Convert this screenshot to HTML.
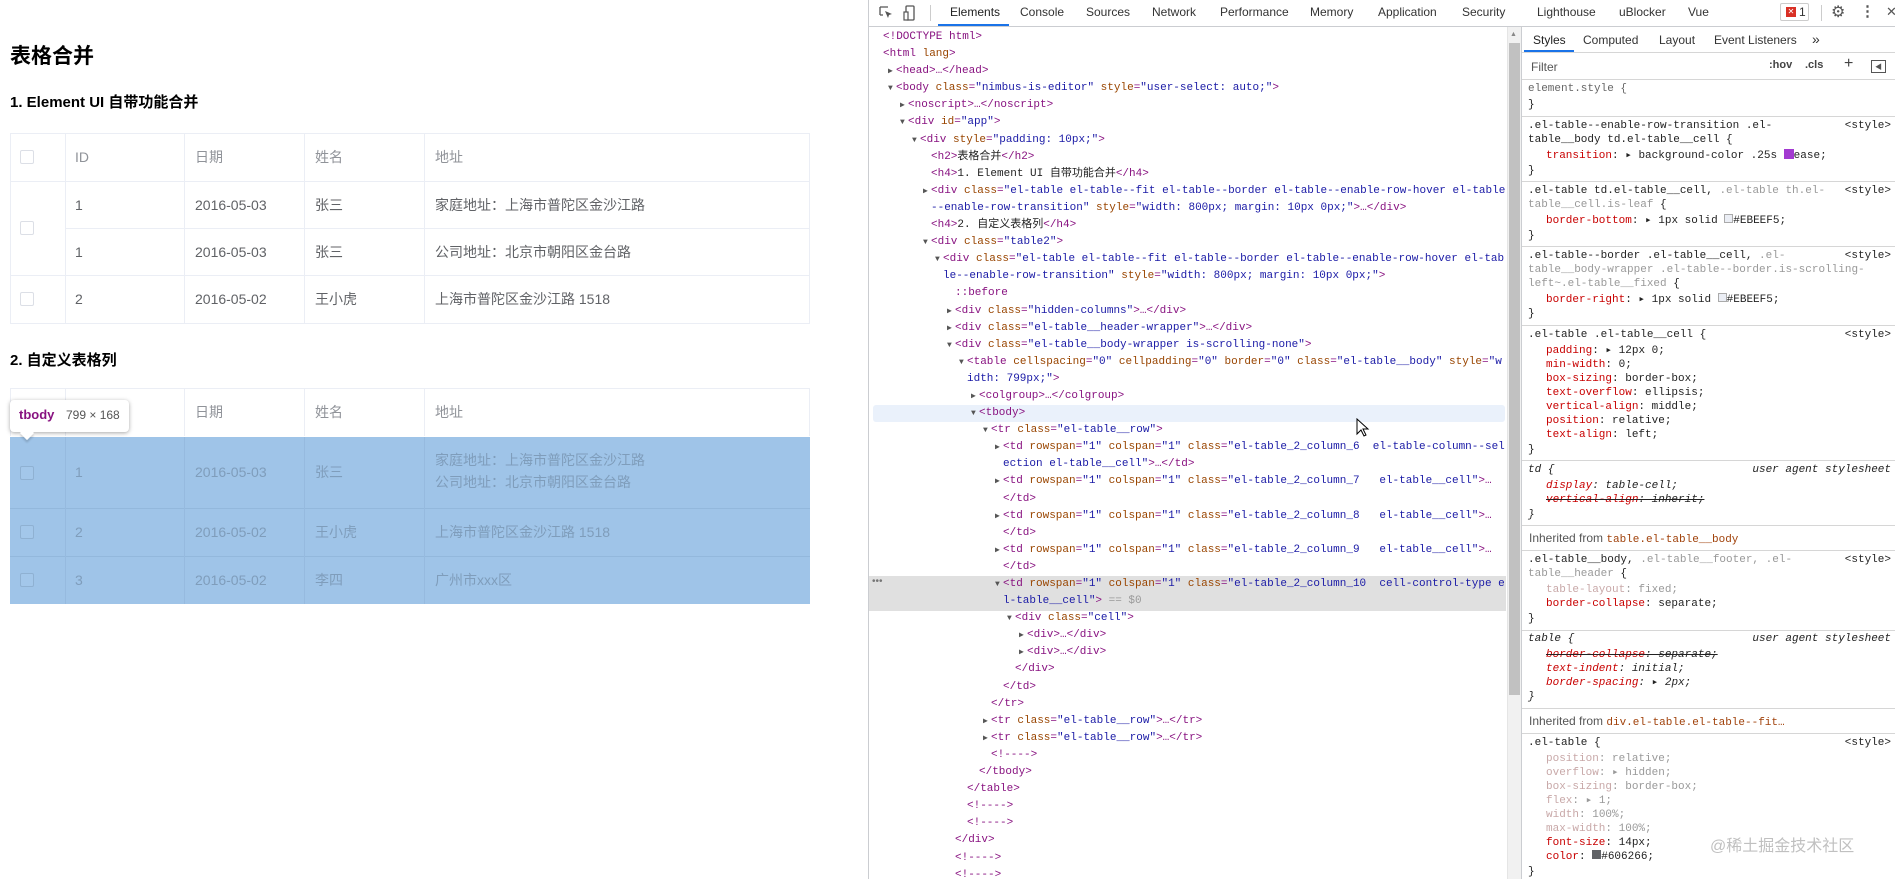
<!DOCTYPE html>
<html><head><meta charset="utf-8">
<style>
*{margin:0;padding:0;box-sizing:border-box}
body{width:1895px;height:879px;overflow:hidden;background:#fff;position:relative;font-family:"Liberation Sans","Noto Sans CJK SC",sans-serif}
.a{position:absolute;white-space:nowrap}
h2,h4{position:absolute;font-weight:bold;color:#000;white-space:nowrap}
.tbl{position:absolute;left:10px;width:800px;border:1px solid #EBEEF5;border-right:0;border-bottom:0}
.hl{position:absolute;height:1px;background:#EBEEF5}
.vl{position:absolute;width:1px;background:#EBEEF5}
.t{position:absolute;font-size:14px;color:#606266;white-space:nowrap;line-height:16px}
.th{color:#909399}
.cb{position:absolute;width:14px;height:14px;border:1px solid #DCDFE6;border-radius:2px;background:#fff}
.mono{font-family:"Liberation Mono","DejaVu Sans Mono","Noto Sans CJK SC",monospace;font-size:11px}
#dom{position:absolute;left:869px;top:29px;width:638px;}
#dom div{height:17.1px;line-height:17.1px;white-space:pre;overflow:hidden;position:relative;color:#881280}
.tg{color:#881280}.an{color:#994500}.av{color:#1a1aa6}.cm{color:#236e25}.gy{color:#999}.bk{color:#222}
.ar{position:absolute;font-size:8px;color:#555}
.sl{position:absolute;left:1528px;font-family:"Liberation Mono","DejaVu Sans Mono",monospace;font-size:11px;color:#222;white-space:nowrap;line-height:14px}
.p{left:1546px}
.pn{color:#c80000}
.dim{color:#c8a8a8}.dimv{color:#999}
.src{position:absolute;right:4px;font-family:"Liberation Mono",monospace;font-size:11px;color:#222;line-height:14px}
.sep{position:absolute;left:1522px;width:373px;height:1px;background:#d6d6d6}
.tab{position:absolute;top:5px;font-size:12px;color:#333;white-space:nowrap}
</style></head><body>

<!-- LEFT PAGE -->
<h2 style="left:10px;top:40px;font-size:21px">表格合并</h2>
<h4 style="left:10px;top:91px;font-size:15px">1. Element UI 自带功能合并</h4>

<!-- table 1 -->
<div class="hl" style="left:10px;top:133px;width:800px"></div>
<div class="hl" style="left:10px;top:181px;width:800px"></div>
<div class="hl" style="left:65px;top:228px;width:745px"></div>
<div class="hl" style="left:10px;top:275px;width:800px"></div>
<div class="hl" style="left:10px;top:323px;width:800px"></div>
<div class="vl" style="left:10px;top:133px;height:191px"></div>
<div class="vl" style="left:65px;top:133px;height:191px"></div>
<div class="vl" style="left:184px;top:133px;height:191px"></div>
<div class="vl" style="left:304px;top:133px;height:191px"></div>
<div class="vl" style="left:424px;top:133px;height:191px"></div>
<div class="vl" style="left:809px;top:133px;height:191px"></div>
<div class="cb" style="left:20px;top:150px"></div>
<div class="cb" style="left:20px;top:221px"></div>
<div class="cb" style="left:20px;top:292px"></div>
<div class="t th" style="left:75px;top:149px">ID</div>
<div class="t th" style="left:195px;top:149px">日期</div>
<div class="t th" style="left:315px;top:149px">姓名</div>
<div class="t th" style="left:435px;top:149px">地址</div>
<div class="t" style="left:75px;top:197px">1</div><div class="t" style="left:195px;top:197px">2016-05-03</div><div class="t" style="left:315px;top:197px">张三</div><div class="t" style="left:435px;top:197px">家庭地址：上海市普陀区金沙江路</div>
<div class="t" style="left:75px;top:244px">1</div><div class="t" style="left:195px;top:244px">2016-05-03</div><div class="t" style="left:315px;top:244px">张三</div><div class="t" style="left:435px;top:244px">公司地址：北京市朝阳区金台路</div>
<div class="t" style="left:75px;top:291px">2</div><div class="t" style="left:195px;top:291px">2016-05-02</div><div class="t" style="left:315px;top:291px">王小虎</div><div class="t" style="left:435px;top:291px">上海市普陀区金沙江路 1518</div>

<h4 style="left:10px;top:349px;font-size:15px">2. 自定义表格列</h4>

<!-- table 2 -->
<div class="hl" style="left:10px;top:388px;width:800px"></div>
<div class="vl" style="left:10px;top:388px;height:48px"></div>
<div class="vl" style="left:65px;top:388px;height:48px"></div>
<div class="vl" style="left:184px;top:388px;height:48px"></div>
<div class="vl" style="left:304px;top:388px;height:48px"></div>
<div class="vl" style="left:424px;top:388px;height:48px"></div>
<div class="vl" style="left:809px;top:388px;height:48px"></div>
<div class="t th" style="left:75px;top:404px">ID</div>
<div class="t th" style="left:195px;top:404px">日期</div>
<div class="t th" style="left:315px;top:404px">姓名</div>
<div class="t th" style="left:435px;top:404px">地址</div>
<div class="a" style="left:10px;top:437px;width:800px;height:167px;background:#9fc4e8"></div>
<div class="a" style="left:10px;top:508px;width:800px;height:1px;background:#93b8dc"></div>
<div class="a" style="left:10px;top:556px;width:800px;height:1px;background:#93b8dc"></div>
<div class="a" style="left:65px;top:437px;width:1px;height:167px;background:#96badf"></div>
<div class="a" style="left:184px;top:437px;width:1px;height:167px;background:#96badf"></div>
<div class="a" style="left:304px;top:437px;width:1px;height:167px;background:#96badf"></div>
<div class="a" style="left:424px;top:437px;width:1px;height:167px;background:#96badf"></div>
<div class="cb" style="left:20px;top:466px;background:#a3c7ea;border-color:#8fb1d2"></div>
<div class="cb" style="left:20px;top:525px;background:#a3c7ea;border-color:#8fb1d2"></div>
<div class="cb" style="left:20px;top:573px;background:#a3c7ea;border-color:#8fb1d2"></div>
<div class="t" style="left:75px;top:464px;color:#7f9dbb">1</div><div class="t" style="left:195px;top:464px;color:#7f9dbb">2016-05-03</div><div class="t" style="left:315px;top:464px;color:#7f9dbb">张三</div>
<div class="t" style="left:435px;top:452px;color:#7f9dbb">家庭地址：上海市普陀区金沙江路</div>
<div class="t" style="left:435px;top:474px;color:#7f9dbb">公司地址：北京市朝阳区金台路</div>
<div class="t" style="left:75px;top:524px;color:#7f9dbb">2</div><div class="t" style="left:195px;top:524px;color:#7f9dbb">2016-05-02</div><div class="t" style="left:315px;top:524px;color:#7f9dbb">王小虎</div><div class="t" style="left:435px;top:524px;color:#7f9dbb">上海市普陀区金沙江路 1518</div>
<div class="t" style="left:75px;top:572px;color:#7f9dbb">3</div><div class="t" style="left:195px;top:572px;color:#7f9dbb">2016-05-02</div><div class="t" style="left:315px;top:572px;color:#7f9dbb">李四</div><div class="t" style="left:435px;top:572px;color:#7f9dbb">广州市xxx区</div>

<!-- tooltip -->
<div class="a" style="left:10px;top:400px;width:119px;height:32px;background:#fff;border-radius:4px;box-shadow:0 1px 4px rgba(0,0,0,.35)"></div>
<div class="a" style="left:22px;top:428px;width:10px;height:10px;background:#fff;transform:rotate(45deg);box-shadow:2px 2px 2px rgba(0,0,0,.15)"></div>
<div class="a" style="left:19px;top:407px;font-size:13px;font-weight:bold;color:#881280">tbody</div>
<div class="a" style="left:66px;top:408px;font-size:12px;color:#555">799 × 168</div>

<!-- DEVTOOLS -->
<div class="a" style="left:868px;top:0;width:1px;height:879px;background:#cbcdd1"></div>
<div class="a" style="left:869px;top:26px;width:1026px;height:1px;background:#cbcdd1"></div>
<svg class="a" style="left:878px;top:5px" width="16" height="16" viewBox="0 0 16 16"><path d="M2 2h8M2 2v8M2 10h3" stroke="#555" fill="none" stroke-width="1.3"/><path d="M7 6l7 3-3 1-1 3z" fill="#555"/></svg>
<svg class="a" style="left:903px;top:4px" width="14" height="18" viewBox="0 0 14 18"><rect x="3" y="2" width="8" height="14" rx="1" stroke="#555" fill="none" stroke-width="1.3"/><rect x="1" y="8" width="4" height="8" fill="#fff" stroke="#555" stroke-width="1.2"/></svg>
<div class="a" style="left:930px;top:5px;width:1px;height:16px;background:#ccc"></div>
<div class="tab" style="left:950px;color:#222">Elements</div>
<div class="a" style="left:938px;top:24px;width:71px;height:2px;background:#1a73e8"></div>
<div class="tab" style="left:1020px">Console</div>
<div class="tab" style="left:1086px">Sources</div>
<div class="tab" style="left:1152px">Network</div>
<div class="tab" style="left:1220px">Performance</div>
<div class="tab" style="left:1310px">Memory</div>
<div class="tab" style="left:1378px">Application</div>
<div class="tab" style="left:1462px">Security</div>
<div class="tab" style="left:1537px">Lighthouse</div>
<div class="tab" style="left:1619px">uBlocker</div>
<div class="tab" style="left:1688px">Vue</div>
<div class="a" style="left:1780px;top:3px;width:29px;height:18px;border:1px solid #ccc;border-radius:2px"></div>
<div class="a" style="left:1786px;top:7px;width:10px;height:10px;background:#d93025;color:#fff;font-size:8px;line-height:10px;text-align:center">✕</div>
<div class="a" style="left:1799px;top:5px;font-size:12px;color:#333">1</div>
<div class="a" style="left:1821px;top:5px;width:1px;height:16px;background:#ccc"></div>
<div class="a" style="left:1831px;top:2px;font-size:16px;color:#555">⚙</div>
<div class="a" style="left:1860px;top:2px;font-size:15px;color:#555;font-weight:bold">⋮</div>
<div class="a" style="left:1886px;top:4px;font-size:13px;color:#555">✕</div>

<!-- DOM highlights -->
<div class="a" style="left:873px;top:405px;width:632px;height:17px;background:#eaf1fb;border-radius:3px"></div>
<div class="a" style="left:869px;top:576px;width:637px;height:35px;background:#e0e0e0"></div>
<div class="a" style="left:872px;top:576px;font-size:10px;color:#777">•••</div>

<div id="dom" class="mono">
<div style="padding-left:14px" class="gy">&lt;!DOCTYPE html&gt;</div>
<div style="padding-left:14px">&lt;html <span class="an">lang</span>&gt;</div>
<div style="padding-left:27px"><span class="ar" style="left:19px">▶</span>&lt;head&gt;…&lt;/head&gt;</div>
<div style="padding-left:27px"><span class="ar" style="left:19px">▼</span>&lt;body <span class="an">class</span>=<span class="av">"nimbus-is-editor"</span> <span class="an">style</span>=<span class="av">"user-select: auto;"</span>&gt;</div>
<div style="padding-left:39px"><span class="ar" style="left:31px">▶</span>&lt;noscript&gt;…&lt;/noscript&gt;</div>
<div style="padding-left:39px"><span class="ar" style="left:31px">▼</span>&lt;div <span class="an">id</span>=<span class="av">"app"</span>&gt;</div>
<div style="padding-left:51px"><span class="ar" style="left:43px">▼</span>&lt;div <span class="an">style</span>=<span class="av">"padding: 10px;"</span>&gt;</div>
<div style="padding-left:62px">&lt;h2&gt;<span class="bk">表格合并</span>&lt;/h2&gt;</div>
<div style="padding-left:62px">&lt;h4&gt;<span class="bk">1. Element UI 自带功能合并</span>&lt;/h4&gt;</div>
<div style="padding-left:62px"><span class="ar" style="left:54px">▶</span>&lt;div <span class="an">class</span>=<span class="av">"el-table el-table--fit el-table--border el-table--enable-row-hover el-table</span></div>
<div style="padding-left:62px"><span class="av">--enable-row-transition"</span> <span class="an">style</span>=<span class="av">"width: 800px; margin: 10px 0px;"</span>&gt;…&lt;/div&gt;</div>
<div style="padding-left:62px">&lt;h4&gt;<span class="bk">2. 自定义表格列</span>&lt;/h4&gt;</div>
<div style="padding-left:62px"><span class="ar" style="left:54px">▼</span>&lt;div <span class="an">class</span>=<span class="av">"table2"</span>&gt;</div>
<div style="padding-left:74px"><span class="ar" style="left:66px">▼</span>&lt;div <span class="an">class</span>=<span class="av">"el-table el-table--fit el-table--border el-table--enable-row-hover el-tab</span></div>
<div style="padding-left:74px"><span class="av">le--enable-row-transition"</span> <span class="an">style</span>=<span class="av">"width: 800px; margin: 10px 0px;"</span>&gt;</div>
<div style="padding-left:86px" class="av">::before</div>
<div style="padding-left:86px"><span class="ar" style="left:78px">▶</span>&lt;div <span class="an">class</span>=<span class="av">"hidden-columns"</span>&gt;…&lt;/div&gt;</div>
<div style="padding-left:86px"><span class="ar" style="left:78px">▶</span>&lt;div <span class="an">class</span>=<span class="av">"el-table__header-wrapper"</span>&gt;…&lt;/div&gt;</div>
<div style="padding-left:86px"><span class="ar" style="left:78px">▼</span>&lt;div <span class="an">class</span>=<span class="av">"el-table__body-wrapper is-scrolling-none"</span>&gt;</div>
<div style="padding-left:98px"><span class="ar" style="left:90px">▼</span>&lt;table <span class="an">cellspacing</span>=<span class="av">"0"</span> <span class="an">cellpadding</span>=<span class="av">"0"</span> <span class="an">border</span>=<span class="av">"0"</span> <span class="an">class</span>=<span class="av">"el-table__body"</span> <span class="an">style</span>=<span class="av">"w</span></div>
<div style="padding-left:98px"><span class="av">idth: 799px;"</span>&gt;</div>
<div style="padding-left:110px"><span class="ar" style="left:102px">▶</span>&lt;colgroup&gt;…&lt;/colgroup&gt;</div>
<div style="padding-left:110px"><span class="ar" style="left:102px">▼</span>&lt;tbody&gt;</div>
<div style="padding-left:122px"><span class="ar" style="left:114px">▼</span>&lt;tr <span class="an">class</span>=<span class="av">"el-table__row"</span>&gt;</div>
<div style="padding-left:134px"><span class="ar" style="left:126px">▶</span>&lt;td <span class="an">rowspan</span>=<span class="av">"1"</span> <span class="an">colspan</span>=<span class="av">"1"</span> <span class="an">class</span>=<span class="av">"el-table_2_column_6  el-table-column--sel</span></div>
<div style="padding-left:134px"><span class="av">ection el-table__cell"</span>&gt;…&lt;/td&gt;</div>
<div style="padding-left:134px"><span class="ar" style="left:126px">▶</span>&lt;td <span class="an">rowspan</span>=<span class="av">"1"</span> <span class="an">colspan</span>=<span class="av">"1"</span> <span class="an">class</span>=<span class="av">"el-table_2_column_7   el-table__cell"</span>&gt;…</div>
<div style="padding-left:134px">&lt;/td&gt;</div>
<div style="padding-left:134px"><span class="ar" style="left:126px">▶</span>&lt;td <span class="an">rowspan</span>=<span class="av">"1"</span> <span class="an">colspan</span>=<span class="av">"1"</span> <span class="an">class</span>=<span class="av">"el-table_2_column_8   el-table__cell"</span>&gt;…</div>
<div style="padding-left:134px">&lt;/td&gt;</div>
<div style="padding-left:134px"><span class="ar" style="left:126px">▶</span>&lt;td <span class="an">rowspan</span>=<span class="av">"1"</span> <span class="an">colspan</span>=<span class="av">"1"</span> <span class="an">class</span>=<span class="av">"el-table_2_column_9   el-table__cell"</span>&gt;…</div>
<div style="padding-left:134px">&lt;/td&gt;</div>
<div style="padding-left:134px"><span class="ar" style="left:126px">▼</span>&lt;td <span class="an">rowspan</span>=<span class="av">"1"</span> <span class="an">colspan</span>=<span class="av">"1"</span> <span class="an">class</span>=<span class="av">"el-table_2_column_10  cell-control-type e</span></div>
<div style="padding-left:134px"><span class="av">l-table__cell"</span>&gt; <span class="gy">== $0</span></div>
<div style="padding-left:146px"><span class="ar" style="left:138px">▼</span>&lt;div <span class="an">class</span>=<span class="av">"cell"</span>&gt;</div>
<div style="padding-left:158px"><span class="ar" style="left:150px">▶</span>&lt;div&gt;…&lt;/div&gt;</div>
<div style="padding-left:158px"><span class="ar" style="left:150px">▶</span>&lt;div&gt;…&lt;/div&gt;</div>
<div style="padding-left:146px">&lt;/div&gt;</div>
<div style="padding-left:134px">&lt;/td&gt;</div>
<div style="padding-left:122px">&lt;/tr&gt;</div>
<div style="padding-left:122px"><span class="ar" style="left:114px">▶</span>&lt;tr <span class="an">class</span>=<span class="av">"el-table__row"</span>&gt;…&lt;/tr&gt;</div>
<div style="padding-left:122px"><span class="ar" style="left:114px">▶</span>&lt;tr <span class="an">class</span>=<span class="av">"el-table__row"</span>&gt;…&lt;/tr&gt;</div>
<div style="padding-left:122px" class="cm">&lt;!----&gt;</div>
<div style="padding-left:110px">&lt;/tbody&gt;</div>
<div style="padding-left:98px">&lt;/table&gt;</div>
<div style="padding-left:98px" class="cm">&lt;!----&gt;</div>
<div style="padding-left:98px" class="cm">&lt;!----&gt;</div>
<div style="padding-left:86px">&lt;/div&gt;</div>
<div style="padding-left:86px" class="cm">&lt;!----&gt;</div>
<div style="padding-left:86px" class="cm">&lt;!----&gt;</div>
</div>

<!-- cursor -->
<svg class="a" style="left:1356px;top:418px" width="14" height="20" viewBox="0 0 14 20"><path d="M1 1v15l4-4 3 6 2-1-3-6h5z" fill="#fff" stroke="#000" stroke-width="1"/></svg>

<!-- scrollbar -->
<div class="a" style="left:1507px;top:27px;width:14px;height:852px;background:#f1f1f1;border-left:1px solid #e5e5e5"></div>
<div class="a" style="left:1509px;top:43px;width:11px;height:652px;background:#c1c1c1"></div>
<div class="a" style="left:1510px;top:31px;font-size:7px;color:#888">▲</div>
<div class="a" style="left:1521px;top:27px;width:1px;height:852px;background:#cbcdd1"></div>

<!-- styles tabs -->
<div class="tab" style="left:1533px;top:33px;color:#222">Styles</div>
<div class="a" style="left:1524px;top:50px;width:50px;height:2px;background:#1a73e8"></div>
<div class="tab" style="left:1583px;top:33px">Computed</div>
<div class="tab" style="left:1659px;top:33px">Layout</div>
<div class="tab" style="left:1714px;top:33px">Event Listeners</div>
<div class="tab" style="left:1812px;top:31px;font-size:14px">»</div>
<div class="sep" style="top:52px"></div>
<div class="a" style="left:1531px;top:60px;font-size:12px;color:#555">Filter</div>
<div class="a" style="left:1769px;top:59px;font-size:11px;font-weight:bold;color:#444">:hov</div>
<div class="a" style="left:1805px;top:59px;font-size:11px;font-weight:bold;color:#444">.cls</div>
<div class="a" style="left:1844px;top:55px;font-size:16px;color:#444">+</div>
<div class="a" style="left:1871px;top:60px;width:15px;height:13px;border:1px solid #555"></div>
<div class="a" style="left:1875px;top:62px;font-size:7px;color:#555">◀</div>
<div class="sep" style="top:79px"></div>

<div class="sl" style="top:82px;color:#666">element.style {</div>
<div class="sl" style="top:98px">}</div>
<div class="sep" style="top:116px"></div>

<div class="sl" style="top:119px">.el-table--enable-row-transition .el-</div><div class="src" style="top:119px">&lt;style&gt;</div>
<div class="sl" style="top:133px">table__body td.el-table__cell {</div>
<div class="sl p" style="top:149px"><span class="pn">transition</span>: ▸ background-color .25s <span style="display:inline-block;width:10px;height:10px;background:#a33ad1;vertical-align:-1px"></span>ease;</div>
<div class="sl" style="top:164px">}</div>
<div class="sep" style="top:181px"></div>

<div class="sl" style="top:184px">.el-table td.el-table__cell, <span class="dimv">.el-table th.el-</span></div><div class="src" style="top:184px">&lt;style&gt;</div>
<div class="sl" style="top:198px"><span class="dimv">table__cell.is-leaf</span> {</div>
<div class="sl p" style="top:214px"><span class="pn">border-bottom</span>: ▸ 1px solid <span style="display:inline-block;width:9px;height:9px;border:1px solid #aaa;background:#EBEEF5"></span>#EBEEF5;</div>
<div class="sl" style="top:229px">}</div>
<div class="sep" style="top:246px"></div>

<div class="sl" style="top:249px">.el-table--border .el-table__cell, <span class="dimv">.el-</span></div><div class="src" style="top:249px">&lt;style&gt;</div>
<div class="sl" style="top:263px"><span class="dimv">table__body-wrapper .el-table--border.is-scrolling-</span></div>
<div class="sl" style="top:277px"><span class="dimv">left~.el-table__fixed</span> {</div>
<div class="sl p" style="top:293px"><span class="pn">border-right</span>: ▸ 1px solid <span style="display:inline-block;width:9px;height:9px;border:1px solid #aaa;background:#EBEEF5"></span>#EBEEF5;</div>
<div class="sl" style="top:307px">}</div>
<div class="sep" style="top:325px"></div>

<div class="sl" style="top:328px">.el-table .el-table__cell {</div><div class="src" style="top:328px">&lt;style&gt;</div>
<div class="sl p" style="top:344px"><span class="pn">padding</span>: ▸ 12px 0;</div>
<div class="sl p" style="top:358px"><span class="pn">min-width</span>: 0;</div>
<div class="sl p" style="top:372px"><span class="pn">box-sizing</span>: border-box;</div>
<div class="sl p" style="top:386px"><span class="pn">text-overflow</span>: ellipsis;</div>
<div class="sl p" style="top:400px"><span class="pn">vertical-align</span>: middle;</div>
<div class="sl p" style="top:414px"><span class="pn">position</span>: relative;</div>
<div class="sl p" style="top:428px"><span class="pn">text-align</span>: left;</div>
<div class="sl" style="top:443px">}</div>
<div class="sep" style="top:460px"></div>

<div class="sl" style="top:463px;font-style:italic">td {</div><div class="src" style="top:463px;font-style:italic">user agent stylesheet</div>
<div class="sl p" style="top:479px;font-style:italic"><span class="pn">display</span>: table-cell;</div>
<div class="sl p" style="top:493px;font-style:italic;text-decoration:line-through"><span class="pn">vertical-align</span>: inherit;</div>
<div class="sl" style="top:508px;font-style:italic">}</div>
<div class="sep" style="top:525px"></div>
<div class="a" style="left:1529px;top:531px;font-size:12px;color:#555">Inherited from <span class="mono" style="color:#a0410a">table.el-table__body</span></div>
<div class="sep" style="top:550px"></div>

<div class="sl" style="top:553px">.el-table__body, <span class="dimv">.el-table__footer, .el-</span></div><div class="src" style="top:553px">&lt;style&gt;</div>
<div class="sl" style="top:567px"><span class="dimv">table__header</span> {</div>
<div class="sl p" style="top:583px"><span class="dim">table-layout</span><span class="dimv">: fixed;</span></div>
<div class="sl p" style="top:597px"><span class="pn">border-collapse</span>: separate;</div>
<div class="sl" style="top:612px">}</div>
<div class="sep" style="top:630px"></div>

<div class="sl" style="top:632px;font-style:italic">table {</div><div class="src" style="top:632px;font-style:italic">user agent stylesheet</div>
<div class="sl p" style="top:648px;font-style:italic;text-decoration:line-through"><span class="pn">border-collapse</span>: separate;</div>
<div class="sl p" style="top:662px;font-style:italic"><span class="pn">text-indent</span>: initial;</div>
<div class="sl p" style="top:676px;font-style:italic"><span class="pn">border-spacing</span>: ▸ 2px;</div>
<div class="sl" style="top:690px;font-style:italic">}</div>
<div class="sep" style="top:708px"></div>
<div class="a" style="left:1529px;top:714px;font-size:12px;color:#555">Inherited from <span class="mono" style="color:#a0410a">div.el-table.el-table--fit…</span></div>
<div class="sep" style="top:733px"></div>

<div class="sl" style="top:736px">.el-table {</div><div class="src" style="top:736px">&lt;style&gt;</div>
<div class="sl p" style="top:752px"><span class="dim">position</span><span class="dimv">: relative;</span></div>
<div class="sl p" style="top:766px"><span class="dim">overflow</span><span class="dimv">: ▸ hidden;</span></div>
<div class="sl p" style="top:780px"><span class="dim">box-sizing</span><span class="dimv">: border-box;</span></div>
<div class="sl p" style="top:794px"><span class="dim">flex</span><span class="dimv">: ▸ 1;</span></div>
<div class="sl p" style="top:808px"><span class="dim">width</span><span class="dimv">: 100%;</span></div>
<div class="sl p" style="top:822px"><span class="dim">max-width</span><span class="dimv">: 100%;</span></div>
<div class="sl p" style="top:836px"><span class="pn">font-size</span>: 14px;</div>
<div class="sl p" style="top:850px"><span class="pn">color</span>: <span style="display:inline-block;width:9px;height:9px;background:#606266"></span>#606266;</div>
<div class="sl" style="top:865px">}</div>
<div class="a" style="left:1710px;top:832px;font-size:16px;color:rgba(150,150,150,.6)">@稀土掘金技术社区</div>
</body></html>
